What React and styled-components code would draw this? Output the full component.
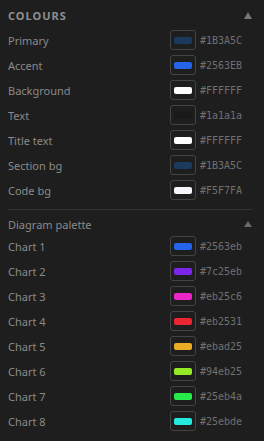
import React from 'react'
import styled, { createGlobalStyle } from 'styled-components'

const colours = [
    { label: 'Primary', hex: '#1B3A5C' },
    { label: 'Accent', hex: '#2563EB' },
    { label: 'Background', hex: '#FFFFFF' },
    { label: 'Text', hex: '#1a1a1a' },
    { label: 'Title text', hex: '#FFFFFF' },
    { label: 'Section bg', hex: '#1B3A5C' },
    { label: 'Code bg', hex: '#F5F7FA' },
]

const palette = [
    '#2563eb',
    '#7c25eb',
    '#eb25c6',
    '#eb2531',
    '#ebad25',
    '#94eb25',
    '#25eb4a',
    '#25ebde',
]

const App = () => {
    return (
        <>
        <Global />
        <Panel>
            <Header>
                <HeaderTitle>Colours</HeaderTitle>
                <Caret size={9} />
            </Header>
            <List>
                {colours.map((c) => (
                    <ColourRow key={c.label} label={c.label} hex={c.hex} />
                ))}
            </List>
            <Divider />
            <SubHeader>
                <SubTitle>Diagram palette</SubTitle>
                <Caret size={8} dim />
            </SubHeader>
            <List>
                {palette.map((hex, i) => (
                    <ColourRow key={hex} label={`Chart ${i + 1}`} hex={hex} />
                ))}
            </List>
        </Panel>
        </>
    )
}

const ColourRow = ({ label, hex }) => (
    <Row>
        <Label>{label}</Label>
        <Swatch>
            <Chip $color={hex} />
        </Swatch>
        <Hex>{hex}</Hex>
    </Row>
)

const Global = createGlobalStyle`
    html, body {
        margin: 0;
        padding: 0;
        background: #1e1e1e;
    }
    body {
        font-family: 'Noto Sans', 'Open Sans', sans-serif;
    }
`

const Panel = styled.div`
    width: 264px;
    height: 441px;
    box-sizing: border-box;
    padding: 8px 12px 8px 8px;
    background: #1e1e1e;
`

const Header = styled.div`
    display: flex;
    align-items: center;
    justify-content: space-between;
    height: 14px;
    margin-bottom: 8px;
`

const HeaderTitle = styled.span`
    font-size: 11px;
    font-weight: 700;
    letter-spacing: 1px;
    text-transform: uppercase;
    color: #8e8e8e;
`

const Caret = styled.span`
    width: 0;
    height: 0;
    border-left: ${(p) => p.size / 2}px solid transparent;
    border-right: ${(p) => p.size / 2}px solid transparent;
    border-bottom: ${(p) => Math.round(p.size * 0.78)}px solid ${(p) => (p.dim ? '#6a6a6a' : '#777777')};
`

const List = styled.div`
    display: flex;
    flex-direction: column;
    gap: 5px;
`

const Row = styled.div`
    display: flex;
    align-items: center;
    height: 20px;
`

const Label = styled.span`
    flex: 1;
    font-size: 11px;
    color: #8a8a8a;
`

const Swatch = styled.div`
    display: flex;
    align-items: center;
    justify-content: center;
    width: 26px;
    height: 20px;
    box-sizing: border-box;
    border: 1px solid #444444;
    border-radius: 3px;
`

const Chip = styled.div`
    width: 18px;
    height: 7px;
    border-radius: 2px;
    background: ${(p) => p.$color};
`

const Hex = styled.span`
    width: 52px;
    margin-left: 4px;
    font-family: 'DejaVu Sans Mono', monospace;
    font-size: 10px;
    color: #707070;
`

const Divider = styled.div`
    height: 1px;
    margin-top: 9px;
    background: #333333;
`

const SubHeader = styled.div`
    display: flex;
    align-items: center;
    justify-content: space-between;
    height: 16px;
    margin-top: 6px;
    margin-bottom: 4px;
`

const SubTitle = styled.span`
    font-size: 11px;
    color: #8a8a8a;
`

export default App
